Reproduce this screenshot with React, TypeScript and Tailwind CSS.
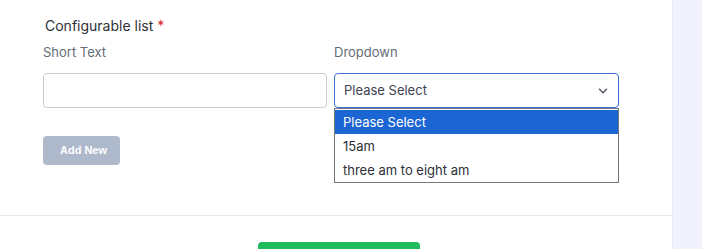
import React from "react";
import { ChevronDown } from "lucide-react";

const options = ["Please Select", "15am", "three am to eight am"];

const App: React.FC = () => {
  return (
    <div className="flex h-[249px] w-[702px] overflow-hidden bg-[#f1f2fc] font-['Inter',sans-serif]">
      <div className="flex w-[673px] shrink-0 flex-col border-r border-[#e6e8f2] bg-white">
        <div className="px-[43px] pt-[16px]">
          <h2 className="pl-[2px] text-[14px] leading-[20px] text-[#2c2f36]">
            Configurable list <span className="text-[#e02424]">*</span>
          </h2>
          <div className="mt-[8px] flex gap-[7px]">
            <div className="w-[284px]">
              <label className="block text-[13px] leading-[16px] text-[#656c7a]">Short Text</label>
              <input
                type="text"
                className="mt-[13px] h-[35px] w-full rounded-[4px] border border-[#c9ccd2] bg-white px-[8px] text-[13px] outline-none"
              />
            </div>
            <div className="w-[285px]">
              <label className="block text-[13px] leading-[16px] text-[#656c7a]">Dropdown</label>
              <div className="relative mt-[13px]">
                <div className="flex h-[35px] w-full items-center justify-between rounded-[4px] border border-[#3a6fd6] bg-white pl-[9px] pr-[8px]">
                  <span className="text-[13px] text-[#3d4250]">Please Select</span>
                  <ChevronDown className="h-[14px] w-[14px] text-[#555a66]" strokeWidth={2.5} />
                </div>
                <ul className="absolute left-0 top-full z-10 w-full border border-[#767676] bg-white pt-[1px] text-[13px] text-[#2c2f36]">
                  {options.map((o, i) => (
                    <li
                      key={o}
                      className={
                        i === 0
                          ? "h-[24px] bg-[#1c66d4] pl-[8px] leading-[24px] text-white"
                          : "h-[24px] pl-[8px] leading-[24px]"
                      }
                    >
                      {o}
                    </li>
                  ))}
                </ul>
              </div>
            </div>
          </div>
          <button className="mt-[28px] h-[29px] w-[77px] rounded-[4px] bg-[#afb9cc] pl-[4px] font-['Liberation_Sans',sans-serif] text-[11px] font-bold text-white">
            Add New
          </button>
        </div>
        <div className="mt-[50px] border-t border-[#e6e8ee]" />
        <div className="flex pl-[258px] pt-[26px]">
          <div className="h-[20px] w-[162px] rounded-[4px] bg-[#20bb5c]" />
        </div>
      </div>
    </div>
  );
};

export default App;
